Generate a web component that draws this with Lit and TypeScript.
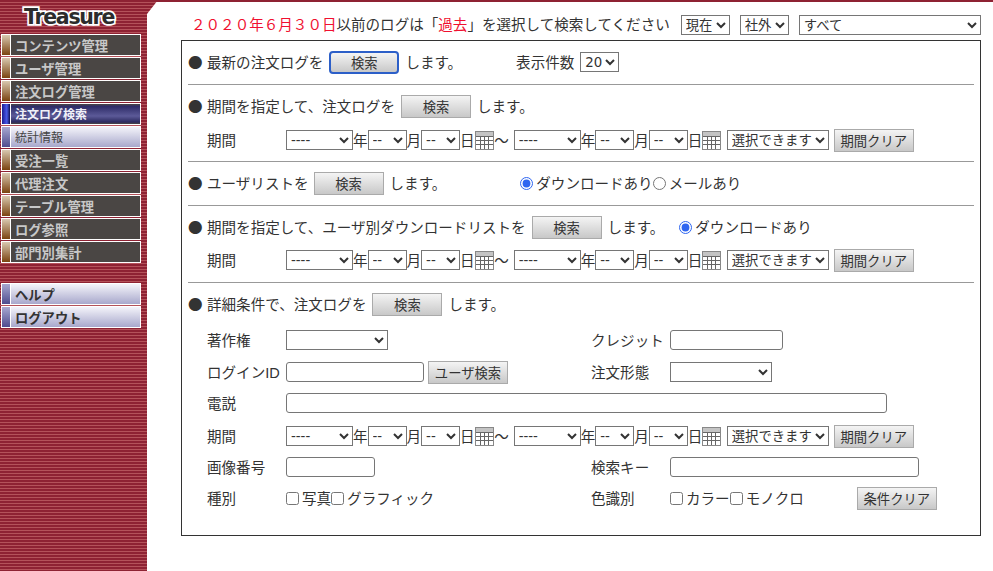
import { LitElement, html, css } from "lit";
import { customElement } from "lit/decorators.js";

const stripes = css`repeating-linear-gradient(to bottom, #8e2233 0, #8e2233 2px, #b4525a 2px, #b4525a 3px)`;

@customElement("app-root")
export class AppRoot extends LitElement {
  static styles = css`
    :host {
      display: block;
      width: 993px;
      height: 571px;
      overflow: hidden;
      background: #fff;
      color: #333;
      font-family: "Liberation Sans", "Noto Sans CJK JP", sans-serif;
      font-size: 14.55px;
      accent-color: #2f66f0;
    }
    * { box-sizing: border-box; }
    .page { display: flex; height: 571px; }
    .side {
      width: 147px;
      flex: none;
      background: ${stripes};
      padding-left: 1px;
      display: flex;
      flex-direction: column;
    }
    .logo {
      height: 34px;
      padding: 4px 0 0 23px;
      font: bold 20.5px/26px "DejaVu Sans", sans-serif;
      letter-spacing: -1.3px;
      color: #2c2c2c;
      -webkit-text-stroke: 3.5px #fff;
      paint-order: stroke fill;
      white-space: nowrap;
    }
    .item {
      width: 140px;
      height: 22px;
      margin-bottom: 1px;
      border: 1px solid #fff;
      display: flex;
      background: #fff;
    }
    .swatch { width: 8px; flex: none; background: linear-gradient(to bottom, #d8c8b0, #7a4410); }
    .label {
      flex: 1;
      margin-left: 1px;
      padding: 2px 0 0 4px;
      background: #4a4644;
      color: #c8c8c8;
      font-weight: bold;
      font-size: 13.3px;
      line-height: 20px;
      white-space: nowrap;
      overflow: hidden;
    }
    .active .swatch { background: linear-gradient(to right, #1c1c90, #4a5ae8 60%, #101050); }
    .active .label {
      padding-top: 1px;
      background: linear-gradient(to bottom, #4a4644 0, #2e2c68 12%, #5c5a98 60%, #2c2a60 90%, #4a4644 100%);
      color: #f0f0f8;
      font-size: 12px;
    }
    .light .swatch { background: linear-gradient(to bottom, #a8a8d0, #4e4c8e); }
    .light .label {
      background: linear-gradient(to bottom, #f4f4fa, #a8a8cc);
      color: #333;
    }
    .plain .label { padding-top: 1px; font-weight: normal; font-size: 12px; color: #444; }
    .spacer { height: 19px; flex: none; }
    .main {
      flex: 1;
      position: relative;
      padding-left: 34px;
    }
    .main::before {
      content: "";
      position: absolute;
      left: 0;
      top: 0;
      width: 11px;
      height: 14px;
      background: ${stripes};
      clip-path: polygon(0 0, 100% 0, 0 100%);
    }
    .main::after {
      content: "";
      position: absolute;
      left: 0;
      right: 0;
      top: 0;
      height: 2px;
      background: #8e2233;
    }
    .top {
      height: 40px;
      padding: 10px 0 0 10px;
      display: flex;
      align-items: center;
      white-space: nowrap;
    }
    .top > span { margin-bottom: 3px; }
    .red { color: #f01030; }
    .top .s1 { margin-left: 11px; }
    .top .s2 { margin-left: 10px; }
    .top .s3 { margin-left: 10px; }
    .panel {
      width: 800px;
      height: 496px;
      border: 1px solid #333;
      padding: 0 6px;
    }
    .sec { border-bottom: 1px solid #999; display: flex; flex-direction: column; }
    .sec.last { border-bottom: 0; }
    .h43 { height: 44px; justify-content: center; padding-bottom: 1px; }
    .s2sec { height: 77px; padding-top: 6px; gap: 4px; }
    .s4sec { height: 77px; padding-top: 6px; gap: 3px; }
    .s5sec { padding-top: 6px; }
    .row {
      height: 30px;
      display: flex;
      align-items: center;
      white-space: nowrap;
      flex: none;
    }
    .row > span, .col > span, .col2 > span { margin-bottom: 2px; }
    .h43 .row { height: 30px; }
    .indent { padding-left: 19px; }
    .s5sec .row:nth-child(2) { margin-top: 6px; }
    .s5sec .row:nth-child(3) { margin-top: 2px; }
    .s5sec .row:nth-child(4) { margin-top: 1px; }
    .s5sec .row:nth-child(5) { margin-top: 3px; }
    .s5sec .row:nth-child(6) { margin-top: 1px; }
    .s5sec .row:nth-child(7) { margin-top: 1px; }
    .bullet {
      width: 14px;
      margin-right: 5px;
      flex: none;
      font-family: "Noto Sans CJK JP", sans-serif;
      color: #333;
    }
    .lab { width: 79px; flex: none; }
    .col { width: 384px; flex: none; display: flex; align-items: center; }
    .col2 { display: flex; align-items: center; }
    select {
      height: 20px;
      margin: 0;
      font-family: "DejaVu Sans", "Noto Sans CJK JP", sans-serif;
      font-size: 13.33px;
      flex: none;
      background-color: #fff;
      color: #333;
    }
    input[type="text"] {
      height: 20px;
      margin: 0;
      padding: 1px 2px;
      flex: none;
      border: 1px solid #767676;
      border-radius: 3px;
      background: #fff;
    }
    input[type="checkbox"], input[type="radio"] {
      margin: 0;
      width: 13px;
      height: 13px;
      flex: none;
    }
    .btn {
      height: 23px;
      width: 70px;
      margin: 0 6px;
      padding: 0;
      flex: none;
      border: 1px solid #aaa;
      background: linear-gradient(to bottom, #f4f4f4, #c8c8c8);
      font-family: "Liberation Sans", "Noto Sans CJK JP", sans-serif;
      font-size: 13.33px;
      color: #333;
    }
    .btn.focus { border: 2px solid #2c5fc8; border-radius: 4px; }
    .btn.wide { width: 80px; }
    .btn.tight { margin-left: 5px; }
    .y { width: 67px; }
    .m { width: 39px; }
    .range { width: 102px; margin-left: 5.5px; }
    .btn.r-clear { margin: 0 0 0 5px; }
    .cal { width: 19px; height: 19px; flex: none; display: block; }
    .tilde { width: 14.5px; margin: 0 5px 0 0.5px; flex: none; }
    .txt { margin-left: 3px; }
    .row > .count { margin-left: 54px; }
    .cnt { width: 39px; margin-left: 6px; }
    .row input.radio-a { margin-left: 74px; }
    .row input.radio-b { margin-left: 15px; }
    .btn.b-end { margin: 0 0 0 53px; }
    .w102 { width: 102px; }
    .w113 { width: 113px; }
    .w138 { width: 138px; }
    .w601 { width: 601px; }
    .w89 { width: 89px; }
    .w249 { width: 249px; }
    .w49 { width: 49px; }
    .w182 { width: 182px; }
    .btn.ub { width: 80px; margin: 0 0 0 4px; }
  `;

  private cal() {
    return html`<svg class="cal" viewBox="0 0 19 19">
      <rect x="0.5" y="0.5" width="18" height="18" fill="#fff" stroke="#888"></rect>
      <rect x="1" y="1" width="17" height="4" fill="#c4c4c4"></rect>
      <path d="M1 5.5H18M1 9.5H18M1 13.5H18M5.5 5V18M9.5 5V18M13.5 5V18" stroke="#666" stroke-width="1" fill="none"></path>
    </svg>`;
  }

  private sel(cls: string, text: string) {
    return html`<select class=${cls}><option>${text}</option></select>`;
  }

  private period() {
    return html`
      <span class="lab">期間</span>
      ${this.sel("y", "----")}<span>年</span>${this.sel("m", "--")}<span>月</span>${this.sel("m", "--")}<span>日</span>${this.cal()}
      <span class="tilde">〜</span>
      ${this.sel("y", "----")}<span>年</span>${this.sel("m", "--")}<span>月</span>${this.sel("m", "--")}<span>日</span>${this.cal()}
      ${this.sel("range", "選択できます")}
      <button class="btn wide r-clear">期間クリア</button>
    `;
  }

  render() {
    const menu1: [string, string][] = [
      ["コンテンツ管理", ""],
      ["ユーザ管理", ""],
      ["注文ログ管理", ""],
      ["注文ログ検索", "active"],
      ["統計情報", "light plain"],
      ["受注一覧", ""],
      ["代理注文", ""],
      ["テーブル管理", ""],
      ["ログ参照", ""],
      ["部門別集計", ""],
    ];
    const item = (t: string, c: string) =>
      html`<div class="item ${c}"><div class="swatch"></div><div class="label">${t}</div></div>`;
    return html`
      <div class="page">
        <nav class="side">
          <div class="logo">Treasure</div>
          ${menu1.map(([t, c]) => item(t, c))}
          <div class="spacer"></div>
          ${item("ヘルプ", "light")}
          ${item("ログアウト", "light")}
        </nav>
        <div class="main">
          <div class="top">
            <span><span class="red">２０２０年６月３０日</span>以前のログは「<span class="red">過去</span>」を選択して検索してください</span>
            <select class="w49 s1"><option>現在</option></select>
            <select class="w49 s2"><option>社外</option></select>
            <select class="w182 s3"><option>すべて</option></select>
          </div>
          <div class="panel">
            <div class="sec h43">
              <div class="row">
                <span class="bullet">●</span><span>最新の注文ログを</span>
                <button class="btn focus">検索</button><span>します。</span>
                <span class="count">表示件数</span>
                <select class="cnt"><option>20</option></select>
              </div>
            </div>
            <div class="sec s2sec">
              <div class="row">
                <span class="bullet">●</span><span>期間を指定して、注文ログを</span>
                <button class="btn">検索</button><span>します。</span>
              </div>
              <div class="row indent">${this.period()}</div>
            </div>
            <div class="sec h43">
              <div class="row">
                <span class="bullet">●</span><span>ユーザリストを</span>
                <button class="btn tight">検索</button><span>します。</span>
                <input class="radio-a" type="radio" name="a" checked /><span class="txt">ダウンロードあり</span>
                <input type="radio" name="a" /><span class="txt">メールあり</span>
              </div>
            </div>
            <div class="sec s4sec">
              <div class="row">
                <span class="bullet">●</span><span>期間を指定して、ユーザ別ダウンロードリストを</span>
                <button class="btn">検索</button><span>します。</span>
                <input class="radio-b" type="radio" name="b" checked /><span class="txt">ダウンロードあり</span>
              </div>
              <div class="row indent">${this.period()}</div>
            </div>
            <div class="sec last s5sec">
              <div class="row">
                <span class="bullet">●</span><span>詳細条件で、注文ログを</span>
                <button class="btn">検索</button><span>します。</span>
              </div>
              <div class="row indent">
                <div class="col"><span class="lab">著作権</span><select class="w102"><option></option></select></div>
                <div class="col2"><span class="lab">クレジット</span><input class="w113" type="text" /></div>
              </div>
              <div class="row indent">
                <div class="col"><span class="lab">ログインID</span><input class="w138" type="text" /><button class="btn ub">ユーザ検索</button></div>
                <div class="col2"><span class="lab">注文形態</span><select class="w102"><option></option></select></div>
              </div>
              <div class="row indent"><span class="lab">電説</span><input class="w601" type="text" /></div>
              <div class="row indent">${this.period()}</div>
              <div class="row indent">
                <div class="col"><span class="lab">画像番号</span><input class="w89" type="text" /></div>
                <div class="col2"><span class="lab">検索キー</span><input class="w249" type="text" /></div>
              </div>
              <div class="row indent">
                <div class="col">
                  <span class="lab">種別</span>
                  <input type="checkbox" /><span class="txt">写真</span>
                  <input type="checkbox" /><span class="txt">グラフィック</span>
                </div>
                <div class="col2">
                  <span class="lab">色識別</span>
                  <input type="checkbox" /><span class="txt">カラー</span>
                  <input type="checkbox" /><span class="txt">モノクロ</span>
                  <button class="btn wide b-end">条件クリア</button>
                </div>
              </div>
            </div>
          </div>
        </div>
      </div>
    `;
  }
}
